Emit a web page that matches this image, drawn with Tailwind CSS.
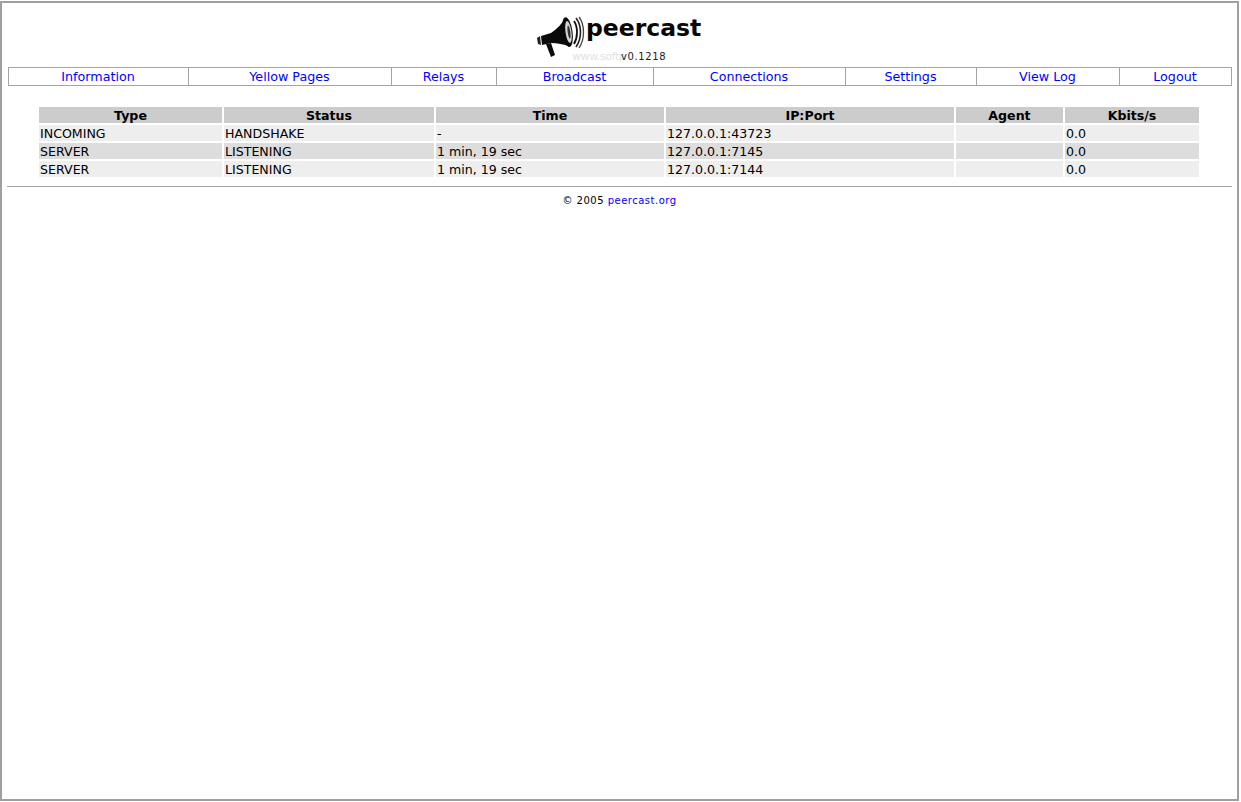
<!DOCTYPE html>
<html lang="en">
<head>
  <meta charset="UTF-8">
  <title>PeerCast</title>
  <script src="https://cdn.jsdelivr.net/npm/@tailwindcss/browser@4"></script>
</head>
<body class="bg-white">
  <div class="h-[802px] w-[1241px] overflow-hidden pt-[1px] pr-[2px] pb-[1px] font-['DejaVu_Sans',sans-serif] text-[12.6px] text-black">
    <div class="h-full border-2 border-[#a0a0a0] px-[5px]">

      <!-- logo -->
      <div class="relative flex h-[64px] items-start justify-center">
        <div class="relative mt-[10px] ml-[3px] flex h-[52px] w-[168px]">
          <svg class="mt-[3px] h-[42px] w-[50px] shrink-0" viewBox="0 0 50 42">
            <path d="M0 22 L3 20 L4 29 L1 28 Z" fill="#222"/>
            <path d="M4 20 L14 17 C20 13 25 8 28 2 L33 31 C27 28 20 27 14 27 L5 29 Z" fill="#0a0a0a"/>
            <path d="M9 28 L14 41 L18 39 L14 27 Z" fill="#0a0a0a"/>
            <ellipse cx="30.5" cy="16" rx="5" ry="15" transform="rotate(-8 30.5 16)" fill="#0a0a0a"/>
            <ellipse cx="31.5" cy="16" rx="3" ry="11" transform="rotate(-8 31.5 16)" fill="#d4d4d4"/>
            <ellipse cx="32" cy="16" rx="1.3" ry="6.5" transform="rotate(-8 32 16)" fill="#333"/>
            <path d="M37 5 C41 11 41 21 37 28" fill="none" stroke="#111" stroke-width="1.8"/>
            <path d="M39 2 C45 10 45 22 39 31" fill="none" stroke="#222" stroke-width="1.6"/>
            <path d="M42 1 C48 9 48 23 42 32" fill="none" stroke="#444" stroke-width="1.3"/>
          </svg>
          <span class="ml-[-1px] text-[23.5px] leading-[30px] font-bold text-[#080808]">peercast</span>
          <span class="absolute top-[37px] left-[35px] text-[11px] leading-[14px] tracking-[-0.4px] text-[#e2e2e2]">www.softp</span>
          <span class="absolute top-[37px] left-[84px] text-[10px] leading-[14px] tracking-[0.6px] text-[#222]">v0.1218</span>
        </div>
      </div>

      <!-- nav -->
      <nav class="ml-[1px] flex h-[19px] w-[1224px] border-y border-r border-[#a4a4a4] text-center text-[12.7px] leading-[17px] text-[#0000ff]">
        <a class="w-[180px] border-l border-[#a4a4a4] pr-[1px]" href="#">Information</a>
        <a class="w-[203px] border-l border-[#a4a4a4] pr-[1px]" href="#">Yellow Pages</a>
        <a class="w-[105px] border-l border-[#a4a4a4] pr-[1px]" href="#">Relays</a>
        <a class="w-[157px] border-l border-[#a4a4a4] pr-[1px]" href="#">Broadcast</a>
        <a class="w-[192px] border-l border-[#a4a4a4] pr-[1px]" href="#">Connections</a>
        <a class="w-[131px] border-l border-[#a4a4a4] pr-[1px]" href="#">Settings</a>
        <a class="w-[143px] border-l border-[#a4a4a4] pr-[1px]" href="#">View Log</a>
        <a class="flex-1 border-l border-[#a4a4a4] pr-[1px]" href="#">Logout</a>
      </nav>

      <!-- connections -->
      <div class="mt-[21px] ml-[32px] grid w-[1160px] grid-cols-[183px_210px_228px_288px_107px_134px] gap-[2px] leading-[18px]">
        <div class="h-[16px] bg-[#cccccc] text-center font-bold">Type</div>
        <div class="h-[16px] bg-[#cccccc] text-center font-bold">Status</div>
        <div class="h-[16px] bg-[#cccccc] text-center font-bold">Time</div>
        <div class="h-[16px] bg-[#cccccc] text-center font-bold">IP:Port</div>
        <div class="h-[16px] bg-[#cccccc] text-center font-bold">Agent</div>
        <div class="h-[16px] bg-[#cccccc] text-center font-bold">Kbits/s</div>

        <div class="h-[16px] bg-[#eeeeee] pl-[1px]">INCOMING</div>
        <div class="h-[16px] bg-[#eeeeee] pl-[1px]">HANDSHAKE</div>
        <div class="h-[16px] bg-[#eeeeee] pl-[1px]">-</div>
        <div class="h-[16px] bg-[#eeeeee] pl-[1px]">127.0.0.1:43723</div>
        <div class="h-[16px] bg-[#eeeeee] pl-[1px]"></div>
        <div class="h-[16px] bg-[#eeeeee] pl-[1px]">0.0</div>

        <div class="h-[16px] bg-[#dddddd] pl-[1px]">SERVER</div>
        <div class="h-[16px] bg-[#dddddd] pl-[1px]">LISTENING</div>
        <div class="h-[16px] bg-[#dddddd] pl-[1px]">1 min, 19 sec</div>
        <div class="h-[16px] bg-[#dddddd] pl-[1px]">127.0.0.1:7145</div>
        <div class="h-[16px] bg-[#dddddd] pl-[1px]"></div>
        <div class="h-[16px] bg-[#dddddd] pl-[1px]">0.0</div>

        <div class="h-[16px] bg-[#eeeeee] pl-[1px]">SERVER</div>
        <div class="h-[16px] bg-[#eeeeee] pl-[1px]">LISTENING</div>
        <div class="h-[16px] bg-[#eeeeee] pl-[1px]">1 min, 19 sec</div>
        <div class="h-[16px] bg-[#eeeeee] pl-[1px]">127.0.0.1:7144</div>
        <div class="h-[16px] bg-[#eeeeee] pl-[1px]"></div>
        <div class="h-[16px] bg-[#eeeeee] pl-[1px]">0.0</div>
      </div>

      <!-- footer -->
      <div class="mt-[9px] w-[1225px] border-t border-[#a4a4a4] pt-[7px] text-center text-[10px] leading-[13px] tracking-[0.5px]">
        © 2005 <a class="text-[#0000ff]" href="#">peercast.org</a>
      </div>
    </div>
  </div>
</body>
</html>
